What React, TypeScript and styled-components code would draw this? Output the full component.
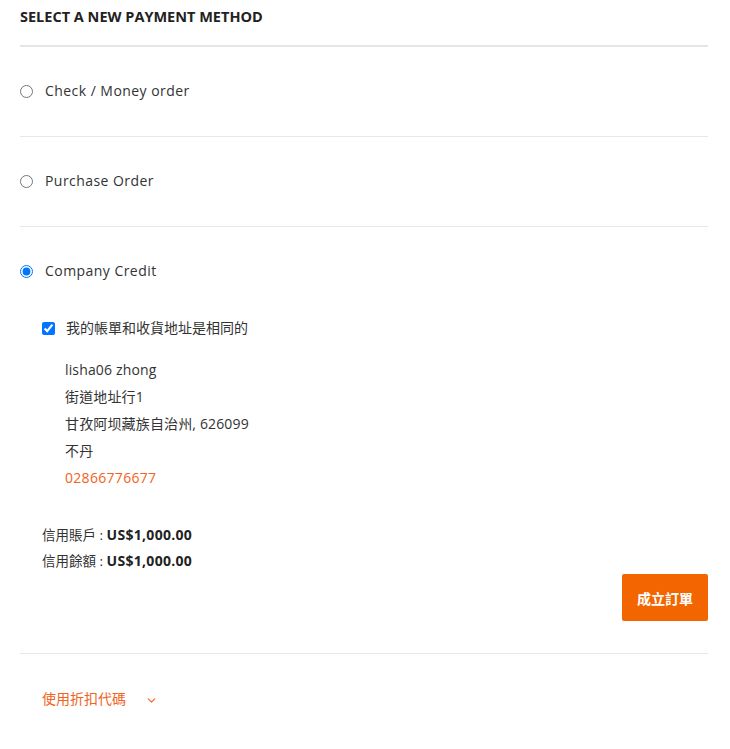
import styled, { createGlobalStyle } from "styled-components";
import { ChevronDown } from "lucide-react";

const GlobalStyle = createGlobalStyle`
  body {
    margin: 0;
    background: #fff;
    font-family: "Open Sans", "Noto Sans CJK TC", sans-serif;
    color: #333;
  }
`;

const methods = [
  { id: "checkmo", label: "Check / Money order" },
  { id: "purchaseorder", label: "Purchase Order" },
  { id: "companycredit", label: "Company Credit" },
];

const address = ["lisha06 zhong", "街道地址行1", "甘孜阿坝藏族自治州, 626099", "不丹"];

const App = () => {
  return (
    <Page>
      <GlobalStyle />
      <Title>Select a new payment method</Title>
      {methods.map((m) => (
        <MethodRow key={m.id} $last={m.id === "companycredit"}>
          <MethodLabel>
            <Radio type="radio" name="payment" defaultChecked={m.id === "companycredit"} />
            <span>{m.label}</span>
          </MethodLabel>
          {m.id === "companycredit" && (
            <Details>
              <SameAddress>
                <Check type="checkbox" defaultChecked />
                <span>我的帳單和收貨地址是相同的</span>
              </SameAddress>
              <Address>
                {address.map((line) => (
                  <div key={line}>{line}</div>
                ))}
                <Phone>02866776677</Phone>
              </Address>
              <Credit>
                <div>
                  信用賬戶 : <b>US$1,000.00</b>
                </div>
                <div>
                  信用餘額 : <b>US$1,000.00</b>
                </div>
              </Credit>
              <Actions>
                <PlaceOrder>成立訂單</PlaceOrder>
              </Actions>
            </Details>
          )}
        </MethodRow>
      ))}
      <Discount>
        <span>使用折扣代碼</span>
        <ChevronDown size={13} strokeWidth={2} />
      </Discount>
    </Page>
  );
};

export default App;

const Page = styled.div`
  width: 688px;
  margin-left: 20px;
`;

const Title = styled.div`
  font-size: 14.5px;
  font-weight: 700;
  text-transform: uppercase;
  line-height: 20px;
  color: #222;
  padding: 7px 0 18px;
  border-bottom: 2px solid #e5e5e5;
`;

const MethodRow = styled.div<{ $last?: boolean }>`
  padding: 34px 0 ${(p) => (p.$last ? "32px" : "35px")};
  border-bottom: 1px solid #e8e8e8;
`;

const MethodLabel = styled.label`
  display: flex;
  align-items: center;
  gap: 12px;
  font-size: 14px;
  line-height: 20px;
  letter-spacing: 0.45px;
  color: #333;
  cursor: pointer;
`;

const Radio = styled.input`
  margin: 0;
  width: 13px;
  height: 13px;
`;

const Details = styled.div`
  padding-left: 22px;
  margin-top: 37px;
`;

const SameAddress = styled.label`
  display: flex;
  align-items: center;
  gap: 11px;
  font-size: 14px;
  line-height: 20px;
  color: #333;
`;

const Check = styled.input`
  margin: 0;
  width: 13px;
  height: 13px;
`;

const Address = styled.div`
  margin-top: 18px;
  padding-left: 23px;
  font-size: 14px;
  line-height: 27px;
  letter-spacing: 0.15px;
  color: #333;
`;

const Phone = styled.div`
  color: #f26322;
  letter-spacing: 0.3px;
`;

const Credit = styled.div`
  margin-top: 31px;
  font-size: 13.5px;
  line-height: 25px;
  color: #333;

  b {
    font-size: 14px;
    font-weight: 700;
    letter-spacing: 0.3px;
    color: #222;
  }
`;

const Actions = styled.div`
  display: flex;
  justify-content: flex-end;
`;

const PlaceOrder = styled.button`
  width: 86px;
  height: 47px;
  border: none;
  border-radius: 2px;
  background: #f26500;
  color: #fff;
  font-family: "Open Sans", "Noto Sans CJK TC", sans-serif;
  font-size: 14px;
  font-weight: 700;
  cursor: pointer;
`;

const Discount = styled.div`
  display: flex;
  align-items: center;
  gap: 19px;
  padding: 35px 0 0 22px;
  font-size: 14px;
  line-height: 20px;
  color: #f26322;

  svg {
    margin-top: 2px;
  }
`;
